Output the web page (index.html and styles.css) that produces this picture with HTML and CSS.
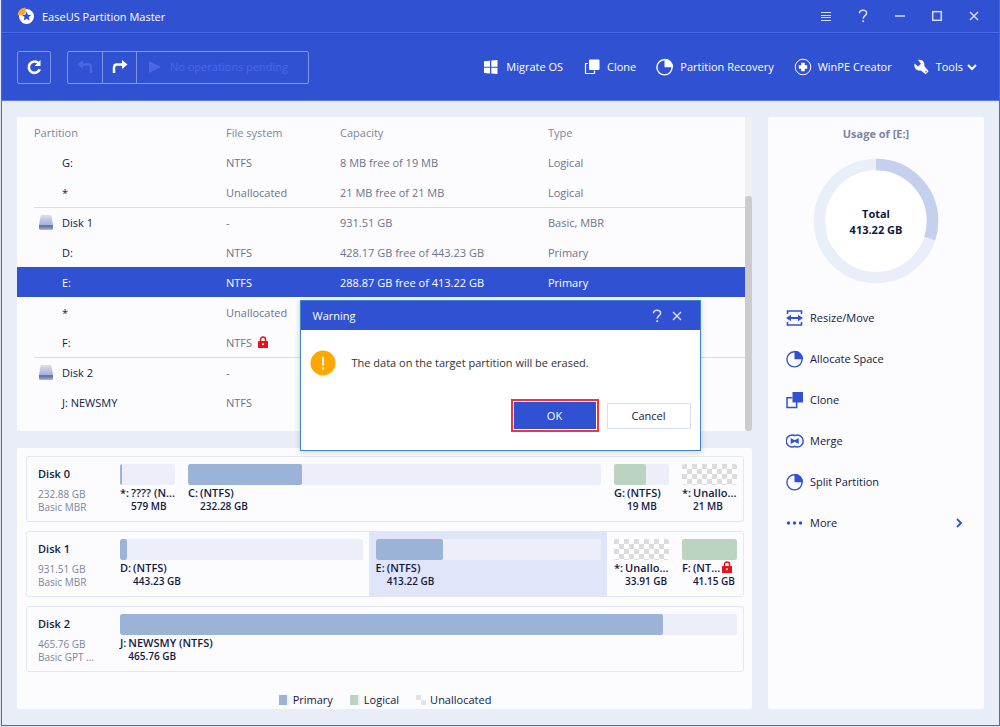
FILE: index.html
```html
<!doctype html>
<html lang="en">
  <head>
    <meta charset="utf-8">
    <meta name="viewport" content="width=device-width, initial-scale=1">
    <title>EaseUS Partition Master</title>
    <link rel="stylesheet" href="styles.css">
  </head>
  <body>
    <svg class="defs" width="0" height="0" aria-hidden="true">
      <symbol id="pie" viewBox="0 0 18 18">
        <circle cx="8.5" cy="9.3" r="7.6" fill="none" stroke="currentColor" stroke-width="1.4"/>
        <path d="M8.5 .8a8.500 8.500 0 0 1 8.700 8.400H8.500z" fill="currentColor"/>
      </symbol>
      <symbol id="lock" viewBox="0 0 10 12">
        <path d="M2.500 6V3.500a2.500 2.500 0 0 1 5 0V6" fill="none" stroke="currentColor" stroke-width="1.500"/>
        <rect y="5" width="10" height="7" rx=".6" fill="currentColor"/>
        <circle cx="5" cy="8.200" r="1" fill="#fff"/>
      </symbol>
      <symbol id="help" viewBox="0 0 12 14">
        <path d="M2.500 4.200C2.500 2.200 4 1.200 6 1.200s3.600 1 3.600 3C9.600 6.600 6.200 6.700 6.200 9.800" fill="none" stroke="currentColor" stroke-width="1.500"/>
        <rect x="5.300" y="11.300" width="1.800" height="1.800" fill="currentColor"/>
      </symbol>
      <symbol id="close" viewBox="0 0 12 14">
        <path d="M2 3l8 8M10 3l-8 8" fill="none" stroke="currentColor" stroke-width="1.500"/>
      </symbol>
      <symbol id="drive" viewBox="0 0 14 15">
        <path d="M1.500 1q.2-1 1.200-1h8.600q1 0 1.200 1L14 10H0z" fill="url(#metal)"/>
        <path d="M0 10h14v3.500q0 1.200-1.200 1.200H1.200Q0 14.700 0 13.500z" fill="#8a99c6"/>
        <path d="M0 10h14v2.500H0z" fill="#6a78a8"/>
      </symbol>
      <linearGradient id="metal" x1="0" y1="0" x2="0" y2="1">
        <stop offset="0" stop-color="#d9dff0"/>
        <stop offset="1" stop-color="#a3b1d8"/>
      </linearGradient>
    </svg>

    <div class="window">
      <header class="titlebar">
        <svg class="logo" width="18" height="18" viewBox="0 0 18 18">
          <circle cx="9.500" cy="9.500" r="7.500" fill="#fff"/>
          <path d="M8.600 .5v5.500L5 8.300H.8C.6 4 4 .8 8.600 .5z" fill="#f9a825"/>
          <path d="M9.600 4.600l1.300 3.100 3.300.2-2.500 2.200.8 3.300-2.900-1.700-2.900 1.700.8-3.300L5 8l3.300-.3z" fill="#3151d3"/>
        </svg>
        <h1>EaseUS Partition Master</h1>
        <div class="window-buttons">
          <button type="button" aria-label="Menu"><svg width="12" height="14" viewBox="0 0 12 14"><path d="M1 3.500h10M1 6.500h10M1 8.500h10M1 11.500h10" stroke="currentColor" stroke-width="1.200"/></svg></button>
          <button type="button" aria-label="Help"><svg width="12" height="14"><use href="#help"/></svg></button>
          <button type="button" aria-label="Minimize"><svg width="12" height="14" viewBox="0 0 12 14"><path d="M1 7h10" stroke="currentColor" stroke-width="1.500"/></svg></button>
          <button type="button" aria-label="Maximize"><svg width="12" height="14" viewBox="0 0 12 14"><rect x="1.700" y="2.700" width="8.600" height="8.600" fill="none" stroke="currentColor" stroke-width="1.500"/></svg></button>
          <button type="button" aria-label="Close"><svg width="12" height="14"><use href="#close"/></svg></button>
        </div>
      </header>

      <div class="toolbar">
        <button type="button" class="tool refresh" aria-label="Refresh">
          <svg width="16" height="16" viewBox="0 0 16 16"><path d="M12.700 4.300A5.700 5.700 0 1 0 13.800 10.300" fill="none" stroke="currentColor" stroke-width="2.600"/><path d="M14.500 1v6H8.600z" fill="currentColor"/></svg>
        </button>
        <div class="tool-group">
          <button type="button" class="tool" aria-label="Undo" disabled>
            <svg width="16" height="14" viewBox="0 0 16 14"><path d="M14 13V7.500q0-3-3-3H4" fill="none" stroke="currentColor" stroke-width="2.500"/><path d="M6 0v9L.5 4.500z" fill="currentColor"/></svg>
          </button>
          <button type="button" class="tool" aria-label="Redo">
            <svg width="16" height="14" viewBox="0 0 16 14"><path d="M2 13V7.500q0-3 3-3h7" fill="none" stroke="currentColor" stroke-width="2.500"/><path d="M10 0v9l5.500-4.500z" fill="currentColor"/></svg>
          </button>
          <button type="button" class="tool pending" disabled>
            <svg width="12" height="12" viewBox="0 0 12 12"><path d="M0 0l12 6-12 6z" fill="currentColor"/></svg>
            No operations pending
          </button>
        </div>
        <nav class="menu">
          <a href="#"><svg width="18" height="18" viewBox="0 0 18 18"><path d="M2 3.200l6-.5v6H2zM9.300 2.600l6.200-.6v6.700H9.300zM2 9.700h6v5.800l-6-.5zM9.300 9.700h6.200V16l-6.200-.6z" fill="currentColor"/></svg>Migrate OS</a>
          <a href="#"><svg width="18" height="18" viewBox="0 0 18 18"><rect x="6" y="1.500" width="10.500" height="10.500" rx="1" fill="currentColor"/><path d="M5 5.500H2.500v10h9v-3" fill="none" stroke="currentColor" stroke-width="1.200"/></svg>Clone</a>
          <a href="#"><svg width="18" height="18"><use href="#pie"/></svg>Partition Recovery</a>
          <a href="#"><svg width="18" height="18" viewBox="0 0 18 18"><circle cx="9" cy="9" r="7.800" fill="none" stroke="currentColor"/><path d="M9 4.800v8.400M4.800 9h8.400" stroke="currentColor" stroke-width="3.600"/></svg>WinPE Creator</a>
          <a href="#"><svg width="18" height="18" viewBox="0 0 18 18"><path d="M6 2C10 .8 13.200 4 12.300 8l4.300 5.300-2.800 3-5-3.800C5 13.300 1.500 10 2.500 5.500L6 8.600 9 5.700z" fill="currentColor"/><circle cx="14" cy="13.800" r=".8" fill="#3151d3"/></svg>Tools<svg class="caret" width="10" height="8" viewBox="0 0 10 8"><path d="M1 2l4 4 4-4" fill="none" stroke="currentColor" stroke-width="2"/></svg></a>
        </nav>
      </div>

      <div class="content">
        <main>
          <section class="panel list">
            <table>
              <colgroup>
                <col class="col-name"><col class="col-fs"><col class="col-capacity"><col>
              </colgroup>
              <thead>
                <tr><th>Partition</th><th>File system</th><th>Capacity</th><th>Type</th></tr>
              </thead>
              <tbody>
                <tr><td>G:</td><td>NTFS</td><td>8 MB free of 19 MB</td><td>Logical</td></tr>
                <tr><td>*</td><td>Unallocated</td><td>21 MB free of 21 MB</td><td>Logical</td></tr>
                <tr class="disk-row"><td><svg width="14" height="15"><use href="#drive"/></svg>Disk 1</td><td>-</td><td>931.51 GB</td><td>Basic, MBR</td></tr>
                <tr><td>D:</td><td>NTFS</td><td>428.17 GB free of 443.23 GB</td><td>Primary</td></tr>
                <tr class="selected"><td>E:</td><td>NTFS</td><td>288.87 GB free of 413.22 GB</td><td>Primary</td></tr>
                <tr><td>*</td><td>Unallocated</td><td></td><td></td></tr>
                <tr><td>F:</td><td>NTFS <svg class="lock" width="10" height="12"><use href="#lock"/></svg></td><td></td><td></td></tr>
                <tr class="disk-row"><td><svg width="14" height="15"><use href="#drive"/></svg>Disk 2</td><td>-</td><td></td><td></td></tr>
                <tr><td>J: NEWSMY</td><td>NTFS</td><td></td><td></td></tr>
              </tbody>
            </table>
            <div class="scrollbar"><div class="thumb"></div></div>
          </section>

          <section class="panel map">
            <div class="disk">
              <div class="disk-info"><h2>Disk 0</h2><p>232.88 GB</p><p>Basic MBR</p></div>
              <div class="part small">
                <div class="bar"><div class="fill" style="width: 4%"></div></div>
                <div class="part-text"><b>*:</b><b>???? (N...</b><span>579 MB</span></div>
              </div>
              <div class="part">
                <div class="bar"><div class="fill" style="width: 27.5%"></div></div>
                <div class="part-text"><b>C:</b><b>(NTFS)</b><span>232.28 GB</span></div>
              </div>
              <div class="part small">
                <div class="bar"><div class="fill logical" style="width: 59%"></div></div>
                <div class="part-text"><b>G:</b><b>(NTFS)</b><span>19 MB</span></div>
              </div>
              <div class="part small">
                <div class="bar unallocated"></div>
                <div class="part-text"><b>*:</b><b>Unallo...</b><span>21 MB</span></div>
              </div>
            </div>

            <div class="disk">
              <div class="disk-info"><h2>Disk 1</h2><p>931.51 GB</p><p>Basic MBR</p></div>
              <div class="part" style="flex-grow: 256">
                <div class="bar"><div class="fill" style="width: 3%"></div></div>
                <div class="part-text"><b>D:</b><b>(NTFS)</b><span>443.23 GB</span></div>
              </div>
              <div class="part current" style="flex-grow: 238">
                <div class="bar"><div class="fill" style="width: 30%"></div></div>
                <div class="part-text"><b>E:</b><b>(NTFS)</b><span>413.22 GB</span></div>
              </div>
              <div class="part small">
                <div class="bar unallocated"></div>
                <div class="part-text"><b>*:</b><b>Unallo...</b><span>33.91 GB</span></div>
              </div>
              <div class="part small">
                <div class="bar"><div class="fill logical" style="width: 100%"></div></div>
                <div class="part-text locked"><b>F:</b><b>(NT...</b><svg class="lock" width="10" height="12"><use href="#lock"/></svg><span>41.15 GB</span></div>
              </div>
            </div>

            <div class="disk">
              <div class="disk-info"><h2>Disk 2</h2><p>465.76 GB</p><p>Basic GPT ...</p></div>
              <div class="part">
                <div class="bar"><div class="fill" style="width: 88%"></div></div>
                <div class="part-text"><b>J:</b><b>NEWSMY (NTFS)</b><span>465.76 GB</span></div>
              </div>
            </div>

            <ul class="legend">
              <li><i class="swatch primary"></i>Primary</li>
              <li><i class="swatch logical"></i>Logical</li>
              <li><i class="swatch free"></i>Unallocated</li>
            </ul>
          </section>
        </main>

        <aside class="panel side">
          <h2>Usage of [E:]</h2>
          <div class="usage">
            <svg width="126" height="126" viewBox="0 0 126 126">
              <circle cx="63" cy="63" r="56.500" fill="#fff" stroke="#eaeef9" stroke-width="11.500"/>
              <circle cx="63" cy="63" r="56.500" fill="none" stroke="#c4d0ee" stroke-width="11.500" pathLength="100" stroke-dasharray="30 70" transform="rotate(-90 63 63)"/>
            </svg>
            <p>Total<br>413.22 GB</p>
          </div>
          <ul class="actions">
            <li><a href="#"><svg width="18" height="18" viewBox="0 0 18 18"><path d="M1.500 5V2h14v3M1.500 13v3h14v-3" fill="none" stroke="currentColor" stroke-width="1.600"/><path d="M3 9h11" stroke="currentColor" stroke-width="2"/><path d="M0 9l5-3.200v6.400zM17 9l-5-3.200v6.400z" fill="currentColor"/></svg>Resize/Move</a></li>
            <li><a href="#"><svg width="18" height="18"><use href="#pie"/></svg>Allocate Space</a></li>
            <li><a href="#"><svg width="18" height="18" viewBox="0 0 18 18"><rect x="6.500" y="1" width="10.500" height="10.500" fill="currentColor"/><path d="M6.500 6.800H1v9.600h9.700V11" fill="none" stroke="currentColor" stroke-width="1.500"/></svg>Clone</a></li>
            <li><a href="#"><svg width="18" height="18" viewBox="0 0 18 18"><path d="M8.700 3.600Q10 3 11.200 3a6 6 0 0 1 0 12q-1.500 0-2.500-.6Q8 15 6.200 15a6 6 0 0 1 0-12Q8 3 8.700 3.600z" fill="none" stroke="currentColor" stroke-width="1.500"/><path d="M4.700 6l4 2.200 4-2.200v6l-4-2.200-4 2.200z" fill="currentColor"/></svg>Merge</a></li>
            <li><a href="#"><svg width="18" height="18"><use href="#pie"/></svg>Split Partition</a></li>
            <li><a href="#"><svg width="18" height="18" viewBox="0 0 18 18"><g fill="currentColor"><circle cx="2.500" cy="9" r="1.700"/><circle cx="8.500" cy="9" r="1.700"/><circle cx="14.500" cy="9" r="1.700"/></g></svg>More<svg class="arrow" width="8" height="10" viewBox="0 0 8 10"><path d="M2 1l4 4-4 4" fill="none" stroke="currentColor" stroke-width="1.800"/></svg></a></li>
          </ul>
        </aside>
      </div>

      <div class="dialog" role="dialog" aria-labelledby="dialog-title">
        <div class="dialog-title">
          <h2 id="dialog-title">Warning</h2>
          <button type="button" aria-label="Help"><svg width="12" height="14"><use href="#help"/></svg></button>
          <button type="button" aria-label="Close"><svg width="12" height="14"><use href="#close"/></svg></button>
        </div>
        <div class="message">
          <svg width="26" height="26" viewBox="0 0 26 26"><circle cx="13" cy="13" r="12.500" fill="#ffa800"/><path d="M13 7v8.500M13 17.500v2" stroke="#fff" stroke-width="1.800"/></svg>
          <p>The data on the target partition will be erased.</p>
        </div>
        <div class="dialog-buttons">
          <button type="button" class="ok">OK</button>
          <button type="button" class="cancel">Cancel</button>
        </div>
      </div>
    </div>
  </body>
</html>
```
FILE: styles.css
```css
* { box-sizing: border-box; }
body { margin: 0; padding-left: 1px; background: #dfe4f2; font: 11px/16px "Open Sans", "Noto Sans", sans-serif; color: #12193f; }
h1, h2, p, ul { margin: 0; padding: 0; font-size: 11px; line-height: 16px; font-weight: normal; }
ul { list-style: none; }
a { color: inherit; text-decoration: none; }
button { margin: 0; padding: 0; border: 0; background: none; font: inherit; color: inherit; }
svg { flex: none; display: block; }
.defs { position: absolute; }

.window { position: relative; display: flex; flex-direction: column; min-height: calc(100vh - 1px); background: #e9edf8; border: 1px solid #4c66da; border-top: 0; }

/* title bar */
.titlebar { display: flex; align-items: center; height: 33px; padding: 0 15px 0 15px; background: #3151d3; color: #fff; border-bottom: 1px solid #4a6ae8; }
.titlebar h1 { flex: 1; margin-left: 7px; padding-top: 2px; }
.window-buttons { display: flex; gap: 16px; color: #d5ddf8; }
.window-buttons button { width: 21px; height: 20px; display: flex; align-items: center; justify-content: center; }

/* toolbar */
.toolbar { display: flex; align-items: center; height: 68px; padding: 0 22px 0 15px; background: #3151d3; border-top: 1px solid #2a48c0; border-bottom: 1px solid #5c78e6; color: #fff; }
.tool { width: 34px; height: 31px; display: flex; align-items: center; justify-content: center; }
.refresh { height: 33px; border: 1px solid #8296e8; border-radius: 2px; }
.tool-group { display: flex; margin-left: 16px; border: 1px solid #8296e8; border-radius: 2px; }
.tool-group .tool + .tool { border-left: 1px solid #8296e8; }
.tool:disabled { color: #4a68e4; }
.tool.pending { width: 172px; gap: 9px; justify-content: flex-start; padding-left: 12px; }
.menu { display: flex; gap: 20px; margin-left: auto; }
.menu a { display: flex; align-items: center; gap: 6px; }
.menu .caret { margin-left: -2px; }

.content { flex: 1; display: flex; gap: 16px; padding: 16px 15px; }
main { flex: 1; min-width: 0; display: flex; flex-direction: column; gap: 17px; }
.panel { background: #fcfcfe; border-radius: 2px; }

/* partition list */
.list { display: flex; min-height: 314px; }
table { flex: 1; align-self: flex-start; border-collapse: collapse; table-layout: fixed; }
.col-name { width: 209px; }
.col-fs { width: 114px; }
.col-capacity { width: 208px; }
th, td { height: 30px; padding: 2px 0 0; text-align: left; font-weight: normal; color: #6b7390; white-space: nowrap; }
th { color: #7b84a3; }
th:first-child { padding-left: 17px; }
td:first-child { padding-left: 45px; color: #12193f; }
td svg { display: inline-block; vertical-align: middle; }
td .lock { margin: -4px 0 0 3px; }
.disk-row { background: linear-gradient(#d9dcea, #d9dcea) 17px 0 / 100% 1px no-repeat; }
.disk-row td:first-child { padding-left: 22px; }
.disk-row svg { margin: -4px 9px 0 0; }
.selected { background: #3151d3; }
.selected td, .selected td:first-child { color: #fff; }
.lock { color: #e3151a; }
.scrollbar { width: 7px; display: flex; align-items: flex-end; background: #f0f0f1; }
.thumb { width: 7px; height: 75%; background: #cbcbcd; border-radius: 3px; }

/* disk map */
.map { flex: 1; display: flex; flex-direction: column; gap: 9px; padding: 8px 8px 0 9px; }
.disk { display: flex; height: 66px; border: 1px solid #e4e7f4; border-radius: 3px; }
.disk-info { flex: none; width: 86px; padding: 9px 0 0 11px; color: #7b84a3; }
.disk-info h2 { margin-bottom: 6px; font-weight: 600; color: #12193f; }
.disk-info p { font-size: 10px; line-height: 13px; white-space: nowrap; }
.part { flex: 1 1 0; min-width: 0; padding: 7px 6px 0 7px; }
.part.small { flex: none; width: 68px; }
.part.current { background: #e1e5fa; }
.bar { height: 21px; border-radius: 2px; background: #eceff9; overflow: hidden; }
.fill { height: 100%; border-radius: 2px; background: #9bb3d6; }
.fill.logical { background: #bbd3c1; }
.unallocated { background: repeating-conic-gradient(#fff 0 25%, #dcdcdc 0 50%) 0 0 / 10px 10px; }
.part-text { display: grid; grid-template-columns: auto 1fr; column-gap: 2px; padding-top: 1px; line-height: 14px; white-space: nowrap; }
.part-text.locked { grid-template-columns: auto auto 1fr; }
.part-text b { font-weight: 600; }
.part-text span { grid-column: 2 / -1; font-size: 10px; line-height: 13px; font-weight: 600; }
.legend { display: flex; justify-content: center; gap: 17px; margin-top: 11px; }
.legend li { display: flex; align-items: center; gap: 4px; }
.swatch { width: 10px; height: 10px; background: #9bb3d6; border-right: 2px solid #eceff9; }
.swatch.logical { background: #bbd3c1; }
.swatch.free { border: 0; background: repeating-conic-gradient(#fff 0 25%, #e4e4e6 0 50%); }

/* side panel */
.side { width: 216px; padding: 9px 18px; }
.side h2 { text-align: center; font-weight: bold; color: #7b84a3; }
.usage { display: grid; place-items: center; margin: 16px 0; }
.usage > * { grid-area: 1 / 1; }
.usage p { padding-top: 2px; text-align: center; font-weight: bold; }
.actions { display: flex; flex-direction: column; gap: 23px; margin-top: 25px; }
.actions a { display: flex; align-items: center; gap: 6px; height: 18px; }
.actions svg { color: #3151d3; }
.actions .arrow { margin: 0 3px 0 auto; }

/* warning dialog */
.dialog { position: absolute; top: 300px; left: 50%; width: 401px; height: 151px; margin-left: -201px; background: #fff; border: 1px solid #3f86c8; box-shadow: 0 1px 6px rgba(0, 0, 0, .2); }
.dialog-title { display: flex; align-items: center; height: 29px; padding: 0 17px 0 12px; background: #3151d3; color: #fff; }
.dialog-title h2 { flex: 1; }
.dialog-title button { margin-left: 8px; color: #d5ddf8; }
.message { display: flex; align-items: center; gap: 16px; padding: 20px 9px 0; color: #333; }
.dialog-buttons { display: flex; align-items: center; justify-content: flex-end; gap: 8px; margin: 23px 9px 0 0; }
.dialog-buttons button { width: 84px; height: 26px; background: #fff; border: 1px solid #dcdff0; }
.dialog-buttons .ok { width: 88px; height: 33px; background: #3151d3; color: #fff; border: 2px solid #f5333a; box-shadow: inset 0 0 0 1px #fff; }
```
